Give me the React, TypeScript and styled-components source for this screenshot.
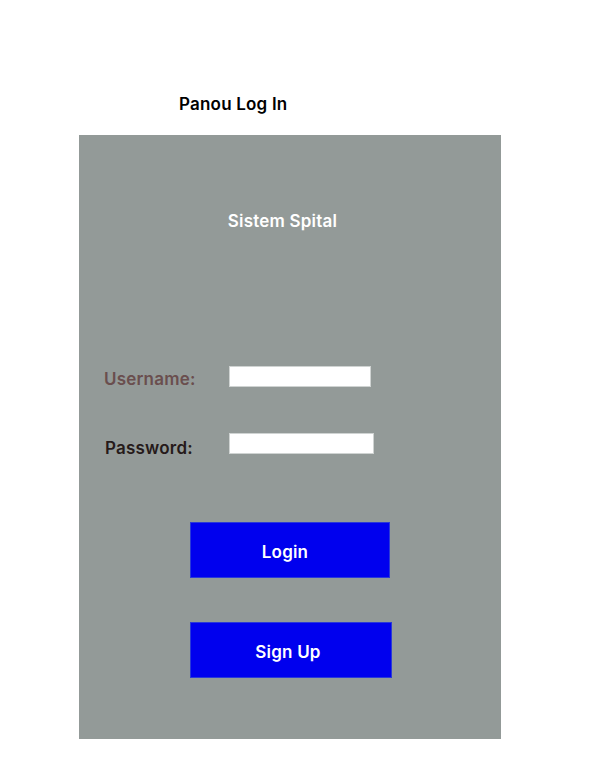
import React from "react";
import styled, { createGlobalStyle } from "styled-components";

const Global = createGlobalStyle`
  html, body { margin: 0; padding: 0; background: #ffffff; }
  body { font-family: "Inter", "Open Sans", sans-serif; }
  * { box-sizing: border-box; }
`;

const Page = styled.div`
  display: flex;
  flex-direction: column;
  padding-top: 92px;
  width: 592px;
  height: 779px;
`;

const PageTitle = styled.h1`
  margin: 0 0 19px 179px;
  font-size: 17px;
  line-height: 24px;
  font-weight: 600;
  letter-spacing: 0.2px;
  color: #000;
`;

const Panel = styled.div`
  margin-left: 79px;
  width: 422px;
  height: 604px;
  background: #939a98;
  display: flex;
  flex-direction: column;
`;

const PanelTitle = styled.h2`
  margin: 74px 0 0 0;
  padding-right: 15px;
  text-align: center;
  font-size: 17px;
  line-height: 24px;
  font-weight: 600;
  letter-spacing: 0.2px;
  color: #ffffff;
`;

const Form = styled.div`
  display: flex;
  flex-direction: column;
  margin-top: 132px;
`;

const Row = styled.div<{ $mt: number; $labelLeft: number }>`
  display: flex;
  align-items: center;
  margin-top: ${(p) => p.$mt}px;
  padding-left: ${(p) => p.$labelLeft}px;
  height: 22px;
`;

const Label = styled.label<{ $color: string; $width: number; $dy: number }>`
  width: ${(p) => p.$width}px;
  font-size: 17px;
  font-weight: 600;
  letter-spacing: 0.2px;
  color: ${(p) => p.$color};
  position: relative;
  top: ${(p) => p.$dy}px;
`;

const Input = styled.input<{ $w: number }>`
  width: ${(p) => p.$w}px;
  height: 21px;
  border: 1px solid #cfd3d2;
  background: #ffffff;
  padding: 0 4px;
  outline: none;
`;

const Buttons = styled.div`
  display: flex;
  flex-direction: column;
  padding-left: 111px;
  margin-top: 68px;
  gap: 44px;
`;

const Button = styled.button<{ $w: number; $shift: number }>`
  width: ${(p) => p.$w}px;
  height: 56px;
  padding: 3px ${(p) => p.$shift}px 0 0;
  background: #0000ee;
  border: 1px solid #2a3ad8;
  color: #ffffff;
  font-family: "Inter", "Open Sans", sans-serif;
  font-size: 17px;
  font-weight: 600;
  letter-spacing: 0.2px;
  cursor: pointer;
`;

export default function App() {
  return (
    <>
      <Global />
      <Page>
        <PageTitle>Panou Log In</PageTitle>
        <Panel>
          <PanelTitle>Sistem Spital</PanelTitle>
          <Form>
            <Row $mt={0} $labelLeft={25}>
              <Label $color="#6a4e4e" $width={125} $dy={3}>Username:</Label>
              <Input $w={142} />
            </Row>
            <Row $mt={45} $labelLeft={26}>
              <Label $color="#261a1a" $width={124} $dy={5}>Password:</Label>
              <Input $w={145} />
            </Row>
          </Form>
          <Buttons>
            <Button $w={200} $shift={10}>Login</Button>
            <Button $w={202} $shift={6}>Sign Up</Button>
          </Buttons>
        </Panel>
      </Page>
    </>
  );
}
